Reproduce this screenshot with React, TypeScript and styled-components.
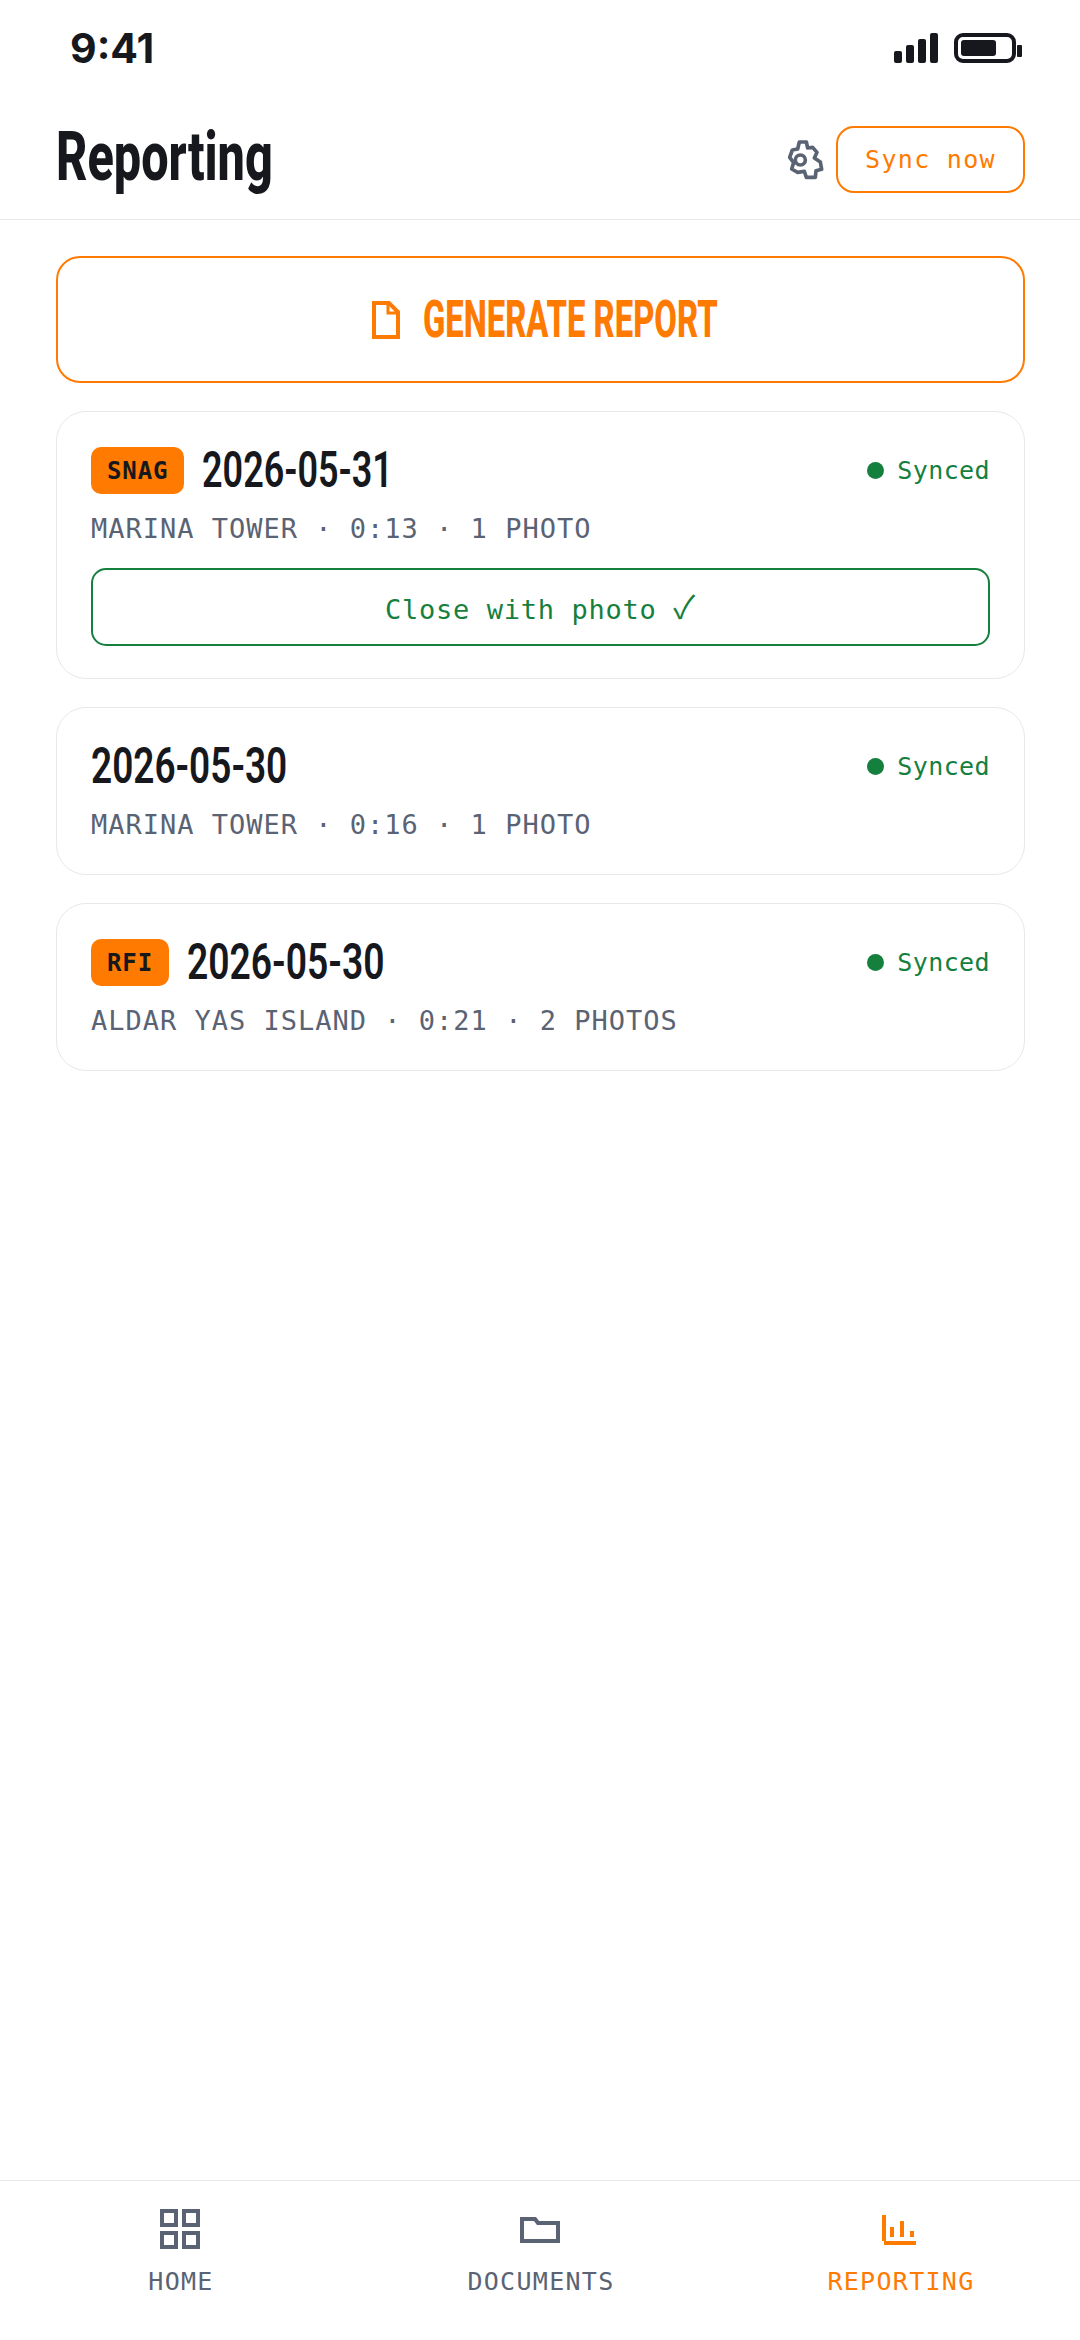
import styled, { createGlobalStyle } from "styled-components";

const GlobalStyle = createGlobalStyle`
  html, body {
    margin: 0;
    padding: 0;
    background: #fff;
  }
`;

const ORANGE = "#ff7a00";
const GREEN = "#15803d";
const INK = "#16181d";
const SLATE = "#5a6373";
const LINE = "#e8e8ea";
const MONO = '"DejaVu Sans Mono", monospace';
const DISPLAY = '"Roboto", sans-serif';

const Page = styled.div`
  width: 1080px;
  height: 2340px;
  display: flex;
  flex-direction: column;
  background: #fff;
  overflow: hidden;
`;

const StatusBar = styled.div`
  height: 100px;
  display: flex;
  align-items: flex-start;
  justify-content: space-between;
  padding: 33px 58px 0 70px;
  box-sizing: border-box;
`;

const Clock = styled.span`
  font-family: "Inter", sans-serif;
  font-weight: 700;
  font-size: 41px;
  line-height: 30px;
  color: ${INK};
`;

const StatusIcons = styled.div`
  display: flex;
  gap: 16px;
`;

const Header = styled.header`
  height: 120px;
  display: flex;
  align-items: center;
  justify-content: space-between;
  padding: 0 55px 0 56px;
  box-sizing: border-box;
  border-bottom: 1px solid ${LINE};
`;

const Squeezed = styled.span<{ $width: number; $scale: number }>`
  display: inline-block;
  width: ${(p) => p.$width}px;
  white-space: nowrap;
  transform: scaleX(${(p) => p.$scale});
  transform-origin: left center;
`;

const Title = styled.h1`
  margin: 0 0 6px;
  font-family: ${DISPLAY};
  font-weight: 800;
  font-size: 68px;
  line-height: 80px;
  color: ${INK};
`;

const HeaderActions = styled.div`
  display: flex;
  align-items: center;
  gap: 7px;
  color: ${SLATE};
`;

const SyncButton = styled.button`
  width: 189px;
  height: 67px;
  padding: 0;
  background: #fff;
  border: 2px solid ${ORANGE};
  border-radius: 18px;
  font-family: ${MONO};
  font-size: 25px;
  letter-spacing: 1.3px;
  color: ${ORANGE};
`;

const Content = styled.main`
  flex: 1;
  display: flex;
  flex-direction: column;
  gap: 28px;
  padding: 36px 55px 0 56px;
`;

const GenerateButton = styled.button`
  height: 127px;
  display: flex;
  align-items: center;
  justify-content: center;
  gap: 23px;
  padding: 0;
  background: #fff;
  border: 2px solid ${ORANGE};
  border-radius: 24px;
  color: ${ORANGE};
  font-family: ${DISPLAY};
  font-weight: 800;
  font-size: 52px;
`;

const Card = styled.section`
  display: flex;
  flex-direction: column;
  padding: 35px 34px 32px 34px;
  background: #fff;
  border: 1px solid ${LINE};
  border-radius: 30px;
`;

const CardTop = styled.div`
  height: 47px;
  display: flex;
  align-items: center;
  justify-content: space-between;
`;

const CardTitle = styled.div`
  display: flex;
  align-items: center;
  gap: 18px;
`;

const Badge = styled.span`
  height: 47px;
  padding: 0 16px;
  display: flex;
  align-items: center;
  background: ${ORANGE};
  border-radius: 10px;
  font-family: ${MONO};
  font-weight: 700;
  font-size: 24px;
  letter-spacing: 0.9px;
  color: ${INK};
`;

const DateText = styled.span`
  font-family: ${DISPLAY};
  font-weight: 600;
  font-size: 50px;
  line-height: 47px;
  color: ${INK};
`;

const SyncState = styled.span`
  display: flex;
  align-items: center;
  gap: 13px;
  font-family: ${MONO};
  font-size: 25px;
  letter-spacing: 0.4px;
  color: ${GREEN};
`;

const Dot = styled.i`
  width: 17px;
  height: 17px;
  border-radius: 50%;
  background: ${GREEN};
`;

const Meta = styled.div`
  margin-top: 17px;
  font-family: ${MONO};
  font-size: 27px;
  line-height: 35px;
  letter-spacing: 1px;
  color: ${SLATE};
`;

const CloseButton = styled.button`
  height: 78px;
  margin-top: 22px;
  padding: 0;
  background: #fff;
  border: 2px solid ${GREEN};
  border-radius: 15px;
  font-family: ${MONO};
  font-size: 27px;
  letter-spacing: 0.7px;
  color: ${GREEN};
`;

const CheckMark = styled.span`
  font-family: "Noto Sans CJK JP", "DejaVu Sans", sans-serif;
  font-size: 32px;
  line-height: 1;
`;

const BottomNav = styled.nav`
  height: 159px;
  display: grid;
  grid-template-columns: repeat(3, 1fr);
  border-top: 1px solid ${LINE};
`;

const NavItem = styled.div<{ $active?: boolean }>`
  display: flex;
  flex-direction: column;
  align-items: center;
  padding-top: 24px;
  color: ${(p) => (p.$active ? ORANGE : SLATE)};
`;

const NavIcon = styled.svg`
  width: 48px;
  height: 48px;
  fill: none;
  stroke: currentColor;
  stroke-width: 4;
`;

const NavLabel = styled.span`
  margin-top: 14px;
  padding-left: 2px;
  font-family: ${MONO};
  font-size: 25px;
  line-height: 30px;
  letter-spacing: 1.3px;
`;

const reports = [
  { id: 1, badge: "SNAG", date: "2026-05-31", width: 185, scale: 0.72, meta: "MARINA TOWER · 0:13 · 1 PHOTO", closable: true },
  { id: 2, date: "2026-05-30", width: 195, scale: 0.74, meta: "MARINA TOWER · 0:16 · 1 PHOTO" },
  { id: 3, badge: "RFI", date: "2026-05-30", width: 195, scale: 0.745, meta: "ALDAR YAS ISLAND · 0:21 · 2 PHOTOS" },
];

function StatusGlyphs() {
  return (
    <StatusIcons>
      <svg width="44" height="30" viewBox="0 0 44 30" fill={INK}>
        <rect x="0" y="18" width="8" height="12" rx="2" />
        <rect x="12" y="12" width="8" height="18" rx="2" />
        <rect x="24" y="6" width="8" height="24" rx="2" />
        <rect x="36" y="0" width="8" height="30" rx="2" />
      </svg>
      <svg width="68" height="30" viewBox="0 0 68 30" fill="none">
        <rect x="2" y="2" width="58" height="26" rx="7" stroke={INK} strokeWidth="4" />
        <rect x="7" y="7" width="35" height="16" rx="3" fill={INK} />
        <rect x="63" y="12" width="5" height="12" rx="1" fill={INK} />
      </svg>
    </StatusIcons>
  );
}

function GearIcon() {
  return (
    <svg width="48" height="52" viewBox="0 0 144 156" fill="none" stroke={SLATE} strokeWidth="11" strokeLinejoin="round">
      <path d="M55 24H76L80 42L95 40L108 55L100 72L118 84L122 106L105 110L103 130H76L70 112L50 115L32 105L38 86L26 70L34 48L50 45Z" />
      <circle cx="58" cy="78" r="15" />
    </svg>
  );
}

export default function App() {
  return (
    <Page>
      <GlobalStyle />
      <StatusBar>
        <Clock>9:41</Clock>
        <StatusGlyphs />
      </StatusBar>
      <Header>
        <Title>
          <Squeezed $width={209} $scale={0.715}>Reporting</Squeezed>
        </Title>
        <HeaderActions>
          <GearIcon />
          <SyncButton>Sync now</SyncButton>
        </HeaderActions>
      </Header>
      <Content>
        <GenerateButton>
          <svg width="28" height="38" viewBox="0 0 28 38" fill="none" stroke={ORANGE} strokeWidth="4">
            <path d="M2 2H17L26 11V36H2Z" />
            <path d="M16 2V12H26" strokeWidth="3" />
          </svg>
          <Squeezed $width={287} $scale={0.63}>GENERATE REPORT</Squeezed>
        </GenerateButton>
        {reports.map((r) => (
          <Card key={r.id}>
            <CardTop>
              <CardTitle>
                {r.badge && <Badge>{r.badge}</Badge>}
                <DateText>
                  <Squeezed $width={r.width} $scale={r.scale}>{r.date}</Squeezed>
                </DateText>
              </CardTitle>
              <SyncState>
                <Dot />
                Synced
              </SyncState>
            </CardTop>
            <Meta>{r.meta}</Meta>
            {r.closable && (
              <CloseButton>
                Close with photo <CheckMark>✓</CheckMark>
              </CloseButton>
            )}
          </Card>
        ))}
      </Content>
      <BottomNav>
        <NavItem>
          <NavIcon viewBox="0 0 48 48">
            <rect x="6" y="6" width="14" height="14" />
            <rect x="28" y="6" width="14" height="14" />
            <rect x="6" y="28" width="14" height="14" />
            <rect x="28" y="28" width="14" height="14" />
          </NavIcon>
          <NavLabel>HOME</NavLabel>
        </NavItem>
        <NavItem>
          <NavIcon viewBox="0 0 48 48">
            <path d="M6 14H19L22 18H42V36H6Z" />
          </NavIcon>
          <NavLabel>DOCUMENTS</NavLabel>
        </NavItem>
        <NavItem $active>
          <NavIcon viewBox="0 0 48 48">
            <path d="M8 10V36M8 38H40M16 22V32M26 16V32M36 26V32" />
          </NavIcon>
          <NavLabel>REPORTING</NavLabel>
        </NavItem>
      </BottomNav>
    </Page>
  );
}
